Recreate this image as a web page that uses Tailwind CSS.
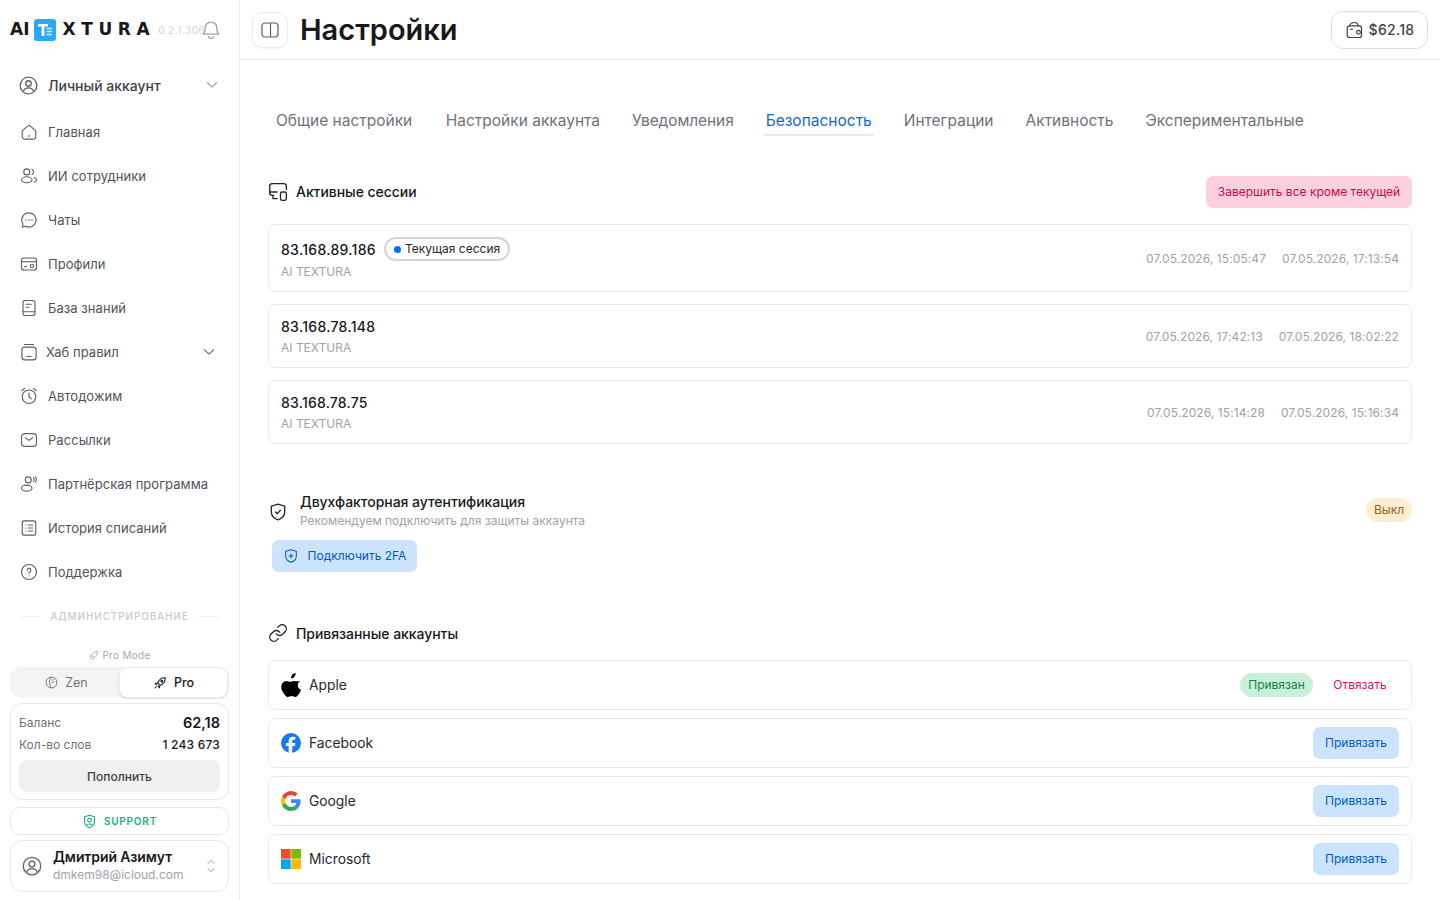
<!DOCTYPE html>
<html lang="ru">
<head>
<meta charset="utf-8">
<title>Настройки</title>
<script src="https://cdn.jsdelivr.net/npm/@tailwindcss/browser@4"></script>
</head>
<body class="bg-white font-['Inter',sans-serif] text-[#18181b] overflow-hidden">
<div class="flex h-[900px] w-[1440px] overflow-hidden">
  <!-- Sidebar -->
  <aside class="flex w-[240px] shrink-0 flex-col border-r border-[#ececee] h-[900px]">
    <div class="flex h-[60px] items-center pl-[10px] relative shrink-0">
      <span class="font-['DejaVu_Sans',sans-serif] text-[17px] font-bold text-[#18181b]">AI</span>
      <svg class="ml-[5px] mr-[6px]" width="22" height="22" viewBox="0 0 22 22"><rect width="22" height="22" rx="3" fill="#2aa8f8"/><path d="M4 5h10v2.500h-3.600V17H7.600V7.500H4z" fill="#fff"/><path d="M12.500 9.500H18M12.500 12.500H18M12.500 15.500H18" stroke="#cfeeff" stroke-width="1.400"/></svg>
      <span class="font-['DejaVu_Sans',sans-serif] text-[17px] font-bold tracking-[5.6px] text-[#18181b]">XTURA</span>
      <span class="ml-[3px] text-[10px] text-[#d4d4d8] tracking-[0.5px]">0.2.1.306</span>
      <svg class="absolute left-[201px] top-[20px]" width="20" height="20" viewBox="0 0 24 24" fill="none" stroke="#a1a1aa" stroke-width="1.600"><path d="M12 2.500a7 7 0 0 0-7 7c0 3.500-.7 5.500-2 7.500h18c-1.300-2-2-4-2-7.500a7 7 0 0 0-7-7Z" stroke-linejoin="round"/><path d="M9 20a3.200 3.200 0 0 0 6 0" stroke-linecap="round"/></svg>
    </div>

    <nav class="flex flex-col text-[13px] text-[#52525b] tracking-[0.05px]">
      <div class="mt-[3px] flex h-[44px] items-center pl-[19px] pr-[21px] gap-[10px] text-[14px] font-medium tracking-normal text-[#3f3f46]">
        <svg class="shrink-0" width="19" height="19" viewBox="0 0 24 24" fill="none" stroke="#5f5f66" stroke-width="1.600"><circle cx="12" cy="12" r="10.500"/><circle cx="12" cy="9.500" r="3.500"/><path d="M5.500 19.500c1-3 3.500-4.500 6.500-4.500s5.500 1.500 6.500 4.500"/></svg>
        <span class="flex-1">Личный аккаунт</span>
        <svg width="12" height="8" viewBox="0 0 12 8" fill="none" stroke="#a1a1aa" stroke-width="1.100"><path d="M1 1.500 6 6l5-4.500"/></svg>
      </div>
      <div class="mt-[3px] flex h-[44px] items-center pl-[20px] gap-[10px]">
        <svg class="shrink-0" width="18" height="18" viewBox="0 0 24 24" fill="none" stroke="#5f5f66" stroke-width="1.500"><path d="M3 10.500 10 4.200a3 3 0 0 1 4 0l7 6.300V18a3.500 3.500 0 0 1-3.500 3.500h-11A3.500 3.500 0 0 1 3 18z" stroke-linejoin="round"/><path d="M12 16.500v1.500" stroke-linecap="round"/></svg>
        <span class="pt-[2px]">Главная</span>
      </div>
      <div class="flex h-[44px] items-center pl-[20px] gap-[10px]">
        <svg class="shrink-0" width="18" height="18" viewBox="0 0 24 24" fill="none" stroke="#5f5f66" stroke-width="1.500" stroke-linecap="round"><circle cx="9" cy="6.500" r="4"/><ellipse cx="9" cy="17" rx="7" ry="4"/><path d="M16 3a4 4 0 0 1 0 7M19 14c2 .6 3 1.800 3 3s-1 2.400-3 3"/></svg>
        <span class="pt-[2px]">ИИ сотрудники</span>
      </div>
      <div class="flex h-[44px] items-center pl-[20px] gap-[10px]">
        <svg class="shrink-0" width="18" height="18" viewBox="0 0 24 24" fill="none" stroke="#5f5f66" stroke-width="1.500" stroke-linecap="round"><path d="M12 2.500a9.500 9.500 0 1 1-4.500 17.900L3 21.500l1-4.200A9.500 9.500 0 0 1 12 2.500Z" stroke-linejoin="round"/><path d="M8 12h.01M12 12h.01M16 12h.01" stroke-width="2"/></svg>
        <span class="pt-[2px]">Чаты</span>
      </div>
      <div class="flex h-[44px] items-center pl-[20px] gap-[10px]">
        <svg class="shrink-0" width="18" height="18" viewBox="0 0 24 24" fill="none" stroke="#5f5f66" stroke-width="1.500"><rect x="2" y="4" width="20" height="16" rx="3.500"/><path d="M2 9h20"/><path d="M5.500 15.500h4"/><circle cx="16" cy="14.500" r="2.200"/></svg>
        <span class="pt-[2px]">Профили</span>
      </div>
      <div class="flex h-[44px] items-center pl-[20px] gap-[10px]">
        <svg class="shrink-0" width="18" height="18" viewBox="0 0 24 24" fill="none" stroke="#5f5f66" stroke-width="1.500" stroke-linecap="round"><rect x="4" y="2" width="16" height="20" rx="3"/><path d="M8 7h7M8 11h4M4 17h16"/></svg>
        <span class="pt-[2px]">База знаний</span>
      </div>
      <div class="flex h-[44px] items-center pl-[20px] pr-[24px] gap-[8px]">
        <svg class="shrink-0" width="18" height="18" viewBox="0 0 24 24" fill="none" stroke="#5f5f66" stroke-width="1.500" stroke-linecap="round"><rect x="2.500" y="5.500" width="19" height="17" rx="4"/><path d="M6 2h12M9 18h6"/></svg>
        <span class="flex-1 pt-[2px]">Хаб правил</span>
        <svg width="12" height="8" viewBox="0 0 12 8" fill="none" stroke="#71717a" stroke-width="1.100"><path d="M1 1.500 6 6l5-4.500"/></svg>
      </div>
      <div class="flex h-[44px] items-center pl-[20px] gap-[10px]">
        <svg class="shrink-0" width="18" height="18" viewBox="0 0 24 24" fill="none" stroke="#5f5f66" stroke-width="1.500" stroke-linecap="round"><circle cx="12" cy="13" r="9"/><path d="M12 8v5l3 3M2.500 5 6 2M21.500 5 18 2"/></svg>
        <span class="pt-[2px]">Автодожим</span>
      </div>
      <div class="flex h-[44px] items-center pl-[20px] gap-[10px]">
        <svg class="shrink-0" width="18" height="18" viewBox="0 0 24 24" fill="none" stroke="#5f5f66" stroke-width="1.500" stroke-linecap="round"><rect x="2" y="3.500" width="20" height="17" rx="4.500"/><path d="m7 9 5 3.500L17 9"/></svg>
        <span class="pt-[2px]">Рассылки</span>
      </div>
      <div class="flex h-[44px] items-center pl-[20px] gap-[10px]">
        <svg class="shrink-0" width="18" height="18" viewBox="0 0 24 24" fill="none" stroke="#5f5f66" stroke-width="1.500" stroke-linecap="round"><circle cx="11" cy="6.500" r="4"/><ellipse cx="9" cy="17.500" rx="7" ry="4"/><path d="M18 3.500c1 1 1 4 0 5M20.500 2c1.500 2 1.500 6 0 8"/></svg>
        <span class="pt-[2px]">Партнёрская программа</span>
      </div>
      <div class="flex h-[44px] items-center pl-[20px] gap-[10px]">
        <svg class="shrink-0" width="18" height="18" viewBox="0 0 24 24" fill="none" stroke="#5f5f66" stroke-width="1.500" stroke-linecap="round"><rect x="3" y="2.500" width="18" height="19" rx="3"/><path d="M7.500 8h.01M7.500 12h.01M7.500 16h.01M11 8h6M11 12h6M11 16h6"/></svg>
        <span class="pt-[2px]">История списаний</span>
      </div>
      <div class="flex h-[44px] items-center pl-[20px] gap-[10px]">
        <svg class="shrink-0" width="18" height="18" viewBox="0 0 24 24" fill="none" stroke="#5f5f66" stroke-width="1.500" stroke-linecap="round"><circle cx="12" cy="12" r="10"/><path d="M9.500 9.500a2.500 2.500 0 1 1 3.800 2.100c-.9.600-1.300 1-1.300 2M12 17h.01"/></svg>
        <span class="pt-[2px]">Поддержка</span>
      </div>
    </nav>

    <div class="mt-[15px] flex items-center gap-[10px] px-[20px] text-[10px] font-medium tracking-[0.85px] text-[#c9c9ce]">
      <div class="h-px flex-1 bg-[#f0f0f2]"></div>
      <span>АДМИНИСТРИРОВАНИЕ</span>
      <div class="h-px flex-1 bg-[#f0f0f2]"></div>
    </div>

    <div class="mt-auto flex flex-col px-[10px] pb-[8px]">
      <div class="mb-[4px] flex items-center justify-center gap-[3px] text-[10px] text-[#a8a8ae] tracking-[0.3px]">
        <svg width="11" height="11" viewBox="0 0 24 24" fill="none" stroke="#a8a8ae" stroke-width="2"><path d="M21 3c-6 0-11 3-13 9l4 4c6-2 9-7 9-13ZM8 12l-4 1 3 3M12 16l-1 4-3-3M3 21l3-3"/></svg>
        <span>Pro Mode</span>
      </div>
      <div class="flex h-[31px] rounded-[10px] bg-[#f4f4f5] text-[12.5px]">
        <div class="flex w-[109px] items-center justify-center gap-[7px] pl-[4px] text-[#71717a]">
          <svg width="13" height="13" viewBox="0 0 24 24" fill="none" stroke="#71717a" stroke-width="1.800"><circle cx="12" cy="12" r="10"/><path d="M12 2c-5 4-5 14 0 20M12 8l4-2M12 13l5-3"/></svg>
          <span class="pt-[2px]">Zen</span>
        </div>
        <div class="flex w-[109px] items-center justify-center gap-[7px] rounded-[9px] border border-[#ececee] bg-white font-medium text-[#18181b] shadow-sm">
          <svg width="14" height="14" viewBox="0 0 24 24" fill="none" stroke="#18181b" stroke-width="1.800"><path d="M21 3c-6 0-11 3-13 9l4 4c6-2 9-7 9-13ZM8 12l-4 1 3 3M12 16l-1 4-3-3M3 21l3-3"/><circle cx="15" cy="9" r="1.500"/></svg>
          <span class="pt-[2px]">Pro</span>
        </div>
      </div>
      <div class="mt-[5px] flex h-[97px] flex-col rounded-[12px] border border-[#e8e8ea] px-[8px] pt-[7px]">
        <div class="flex h-[24px] items-center justify-between">
          <span class="text-[12px] text-[#71717a]">Баланс</span>
          <span class="text-[14.5px] font-semibold">62,18</span>
        </div>
        <div class="flex h-[20px] items-center justify-between">
          <span class="text-[12px] text-[#71717a]">Кол-во слов</span>
          <span class="text-[12px] font-medium tracking-[0.2px]">1 243 673</span>
        </div>
        <div class="mt-[5px] flex h-[32px] items-center justify-center rounded-[8px] bg-[#f0f0f1] pt-[2px] text-[12px] font-medium text-[#3f3f46]">Пополнить</div>
      </div>
      <div class="mt-[7px] flex h-[28px] items-center justify-center gap-[7px] rounded-[10px] border border-[#e8e8ea] text-[10px] font-semibold tracking-[0.8px] text-[#17b27d]">
        <svg width="15" height="15" viewBox="0 0 24 24" fill="none" stroke="#17b27d" stroke-width="1.700"><path d="M12 2 20 4.500V12c0 5-3 8-8 10-5-2-8-5-8-10V4.500z" stroke-linejoin="round"/><circle cx="12" cy="10" r="3"/><path d="M7.500 18c1-2.500 7-2.500 9 0"/></svg>
        <span>SUPPORT</span>
      </div>
      <div class="mt-[5px] flex h-[52px] items-center rounded-[12px] border border-[#e8e8ea] pl-[11px] pr-[12px]">
        <svg class="shrink-0" width="20" height="20" viewBox="0 0 24 24" fill="none" stroke="#5f5f66" stroke-width="1.500"><circle cx="12" cy="12" r="10.500"/><circle cx="12" cy="9.500" r="3.500"/><path d="M5.500 19.500c1-3 3.500-4.500 6.500-4.500s5.500 1.500 6.500 4.500"/></svg>
        <div class="ml-[11px] flex flex-1 flex-col">
          <span class="text-[14px] font-semibold leading-[18px] tracking-[-0.1px]">Дмитрий Азимут</span>
          <span class="text-[12px] leading-[18px] text-[#a1a1aa]">dmkem98@icloud.com</span>
        </div>
        <svg width="10" height="14" viewBox="0 0 10 14" fill="none" stroke="#c4c4c8" stroke-width="1.100"><path d="M1.500 4.500 5 1.500l3.500 3M1.500 9.500 5 12.500l3.500-3"/></svg>
      </div>
    </div>
  </aside>

  <!-- Main -->
  <main class="flex min-w-0 flex-1 flex-col">
    <header class="flex h-[60px] shrink-0 items-center border-b border-[#ececee] pl-[12px] pr-[12px]">
      <button class="flex h-[36px] w-[36px] items-center justify-center rounded-[10px] border border-[#ececee] bg-white shadow-xs">
        <svg width="18" height="18" viewBox="0 0 18 18" fill="none" stroke="#5f5f66" stroke-width="1.200"><rect x="1" y="2" width="16" height="14" rx="3"/><path d="M9.500 2v14"/></svg>
      </button>
      <h1 class="ml-[12px] flex-1 text-[29px] font-semibold leading-none text-[#18181b]">Настройки</h1>
      <div class="flex h-[38px] w-[97px] items-center justify-center gap-[6px] rounded-[12px] border border-[#dfdfe2] text-[14px] font-medium tracking-[0.3px] text-[#3f3f46]">
        <svg width="18" height="18" viewBox="0 0 24 24" fill="none" stroke="#3f3f46" stroke-width="1.600" stroke-linecap="round"><path d="M3 9.500a3 3 0 0 1 3-3h13a3 3 0 0 1 3 3V19a3 3 0 0 1-3 3H6a3 3 0 0 1-3-3z"/><path d="M6 6.500C7 3 10 2 13 2c2.500 0 4 1.500 4.500 4.500M7 11h3"/><circle cx="18" cy="15" r="2.500"/></svg>
        <span>$62.18</span>
      </div>
    </header>

    <div class="flex flex-1 flex-col px-[28px]">
      <div class="mt-[49px] flex h-[27px] items-start gap-[32px] pl-[8px] text-[15.5px] text-[#71717a]">
        <span class="pr-[1.5px]">Общие настройки</span>
        <span>Настройки аккаунта</span>
        <span class="tracking-[-0.1px]">Уведомления</span>
        <span class="-mx-[2px] border-b-[2px] border-[#e3edf9] px-[2px] pb-[2px] text-[#0b6bcb]">Безопасность</span>
        <span>Интеграции</span>
        <span>Активность</span>
        <span>Экспериментальные</span>
      </div>

      <!-- Sessions -->
      <section class="mt-[40px]">
        <div class="flex h-[32px] items-center justify-between">
          <div class="flex items-center gap-[8px]">
            <svg width="20" height="20" viewBox="0 0 24 24" fill="none" stroke="#27272a" stroke-width="1.600" stroke-linecap="round"><path d="M7 16H5a3 3 0 0 1-3-3V5a3 3 0 0 1 3-3h14a3 3 0 0 1 3 3v4"/><path d="M2 12h9M6 16v4h5"/><rect x="15" y="12" width="7" height="10" rx="2"/></svg>
            <h2 class="pb-[2px] text-[14px] font-medium tracking-[-0.05px]">Активные сессии</h2>
          </div>
          <button class="flex h-[32px] w-[206px] items-center justify-center rounded-[7px] bg-[#fdd0df] text-[12px] text-[#c20e4d]">Завершить все кроме текущей</button>
        </div>
        <div class="mt-[16px] flex flex-col gap-[12px]">
          <div class="flex h-[68px] items-center justify-between rounded-[8px] border border-[#e8e8ea] px-[12px]">
            <div class="flex flex-col pt-[2px]">
              <div class="flex items-center gap-[8px]">
                <span class="text-[14px] font-medium tracking-[0.3px]">83.168.89.186</span>
                <span class="flex h-[24px] items-center gap-[4px] rounded-full border-2 border-[#d4d4d8] px-[8px] text-[12px] text-[#27272a]"><span class="h-[7px] w-[7px] rounded-full bg-[#006fee]"></span>Текущая сессия</span>
              </div>
              <span class="mt-[2px] text-[12px] text-[#a1a1aa]">AI TEXTURA</span>
            </div>
            <div class="flex gap-[16px] pt-[1px] text-[12px] tracking-[0.08px] text-[#a1a1aa]"><span>07.05.2026, 15:05:47</span><span>07.05.2026, 17:13:54</span></div>
          </div>
          <div class="flex h-[64px] items-center justify-between rounded-[8px] border border-[#e8e8ea] px-[12px]">
            <div class="flex flex-col pt-[1px]">
              <span class="text-[14px] font-medium tracking-[0.3px]">83.168.78.148</span>
              <span class="mt-[2px] text-[12px] text-[#a1a1aa]">AI TEXTURA</span>
            </div>
            <div class="flex gap-[16px] pt-[1px] text-[12px] tracking-[0.08px] text-[#a1a1aa]"><span>07.05.2026, 17:42:13</span><span>07.05.2026, 18:02:22</span></div>
          </div>
          <div class="flex h-[64px] items-center justify-between rounded-[8px] border border-[#e8e8ea] px-[12px]">
            <div class="flex flex-col pt-[1px]">
              <span class="text-[14px] font-medium tracking-[0.2px]">83.168.78.75</span>
              <span class="mt-[2px] text-[12px] text-[#a1a1aa]">AI TEXTURA</span>
            </div>
            <div class="flex gap-[16px] pt-[1px] text-[12px] tracking-[0.08px] text-[#a1a1aa]"><span>07.05.2026, 15:14:28</span><span>07.05.2026, 15:16:34</span></div>
          </div>
        </div>
      </section>

      <!-- 2FA -->
      <section class="mt-[48px] flex flex-col">
        <div class="flex items-center justify-between">
          <div class="flex items-center gap-[12px]">
            <svg class="mt-[2px]" width="20" height="20" viewBox="0 0 24 24" fill="none" stroke="#27272a" stroke-width="1.600" stroke-linecap="round" stroke-linejoin="round"><path d="M12 2.500 20 5v7c0 5-3.500 8-8 9.500C7.500 20 4 17 4 12V5z"/><path d="m9 12 2 2 4-4"/></svg>
            <div class="flex flex-col">
              <span class="text-[14px] font-medium leading-[20px] tracking-[-0.05px]">Двухфакторная аутентификация</span>
              <span class="text-[12px] leading-[17px] text-[#a1a1aa]">Рекомендуем подключить для защиты аккаунта</span>
            </div>
          </div>
          <span class="mb-[2px] flex h-[24px] w-[46px] items-center justify-center rounded-full bg-[#fdedd3] text-[12px] text-[#936316]">Выкл</span>
        </div>
        <button class="ml-[4px] mt-[11px] flex h-[32px] w-[145px] items-center justify-center gap-[9px] rounded-[7px] bg-[#cce3fd] text-[12px] text-[#005bc4]">
          <svg width="16" height="16" viewBox="0 0 24 24" fill="none" stroke="#005bc4" stroke-width="1.600" stroke-linecap="round" stroke-linejoin="round"><path d="M12 2.500 20 5v7c0 5-3.500 8-8 9.500C7.500 20 4 17 4 12V5z"/><path d="M12 9v6M9 12h6"/></svg>
          <span>Подключить 2FA</span>
        </button>
      </section>

      <!-- Linked -->
      <section class="mt-[45px]">
        <div class="flex h-[32px] items-center gap-[8px]">
          <svg width="20" height="20" viewBox="0 0 24 24" fill="none" stroke="#27272a" stroke-width="1.600" stroke-linecap="round" stroke-linejoin="round"><path d="M10 13a5 5 0 0 0 7.540.54l3-3a5 5 0 0 0-7.070-7.070l-1.720 1.710"/><path d="M14 11a5 5 0 0 0-7.540-.54l-3 3a5 5 0 0 0 7.070 7.070l1.710-1.710"/></svg>
          <h2 class="text-[14px] font-medium tracking-[-0.05px]">Привязанные аккаунты</h2>
        </div>
        <div class="mt-[11px] flex flex-col gap-[8px] text-[13.8px] text-[#27272a]">
          <div class="flex h-[50px] items-center rounded-[8px] border border-[#e8e8ea] pl-[12px] pr-[12px]">
            <svg width="20" height="24" viewBox="0 0 20 24" fill="#000"><path d="M14.700 0c.1 1.500-.4 2.700-1.300 3.700-.9 1-2.100 1.700-3.300 1.600-.2-1.300.4-2.700 1.200-3.600C12.200.7 13.600.1 14.700 0ZM19.300 8.100c-1.600 1-2.500 2.400-2.500 4.200 0 2.100 1.200 3.700 3.200 4.500-.5 1.500-1.200 2.900-2.100 4.200-1 1.400-2 2.900-3.600 2.900-1.500 0-2-.9-3.700-.9-1.800 0-2.300.9-3.700.9-1.500.1-2.700-1.500-3.700-3C.5 17.900-.6 13.700 1 10.800 1.900 9 3.600 7.900 5.400 7.900c1.500 0 2.800 1 3.700 1 .9 0 2.300-1.100 4.200-1 1.500.1 3.700.5 6 .2Z"/></svg>
            <span class="ml-[8px] flex-1">Apple</span>
            <span class="flex h-[24px] w-[73px] items-center justify-center rounded-full bg-[#c9f0d8] text-[12px] text-[#12804a]">Привязан</span>
            <button class="ml-[20px] mr-[12px] w-[54px] text-[12px] text-[#e0115f]">Отвязать</button>
          </div>
          <div class="flex h-[50px] items-center rounded-[8px] border border-[#e8e8ea] pl-[12px] pr-[12px]">
            <svg width="20" height="20" viewBox="0 0 24 24"><circle cx="12" cy="12" r="12" fill="#1877f2"/><path d="M16.700 15.500 17.200 12H13.500V9.700c0-1 .5-1.900 2-1.900h1.700V4.800s-1.500-.3-3-.3c-3 0-5 1.800-5 5.100V12H6v3.500h3.200V24h4.300v-8.500z" fill="#fff"/></svg>
            <span class="ml-[8px] flex-1">Facebook</span>
            <button class="flex h-[32px] w-[86px] items-center justify-center rounded-[7px] bg-[#cce3fd] text-[12px] text-[#005bc4]">Привязать</button>
          </div>
          <div class="flex h-[50px] items-center rounded-[8px] border border-[#e8e8ea] pl-[12px] pr-[12px]">
            <svg width="20" height="20" viewBox="0 0 24 24"><path d="M23.500 12.300c0-.8-.1-1.600-.2-2.400H12v4.500h6.500a5.500 5.500 0 0 1-2.400 3.600v3h3.900c2.200-2.100 3.500-5.100 3.500-8.700Z" fill="#4285f4"/><path d="M12 24c3.200 0 6-1.100 8-2.900l-3.900-3a7.200 7.200 0 0 1-10.800-3.800h-4v3.100A12 12 0 0 0 12 24Z" fill="#34a853"/><path d="M5.300 14.300a7.200 7.200 0 0 1 0-4.600V6.600h-4a12 12 0 0 0 0 10.800z" fill="#fbbc05"/><path d="M12 4.800c1.800 0 3.300.6 4.600 1.800l3.400-3.400A12 12 0 0 0 1.300 6.600l4 3.100A7.200 7.200 0 0 1 12 4.800Z" fill="#ea4335"/></svg>
            <span class="ml-[8px] flex-1">Google</span>
            <button class="flex h-[32px] w-[86px] items-center justify-center rounded-[7px] bg-[#cce3fd] text-[12px] text-[#005bc4]">Привязать</button>
          </div>
          <div class="flex h-[50px] items-center rounded-[8px] border border-[#e8e8ea] pl-[12px] pr-[12px]">
            <svg width="20" height="20" viewBox="0 0 20 20"><rect width="9.700" height="9.700" fill="#f25022"/><rect x="10.300" width="9.700" height="9.700" fill="#7fba00"/><rect y="10.300" width="9.700" height="9.700" fill="#00a4ef"/><rect x="10.300" y="10.300" width="9.700" height="9.700" fill="#ffb900"/></svg>
            <span class="ml-[8px] flex-1">Microsoft</span>
            <button class="flex h-[32px] w-[86px] items-center justify-center rounded-[7px] bg-[#cce3fd] text-[12px] text-[#005bc4]">Привязать</button>
          </div>
        </div>
      </section>
    </div>
  </main>
</div>
</body>
</html>
